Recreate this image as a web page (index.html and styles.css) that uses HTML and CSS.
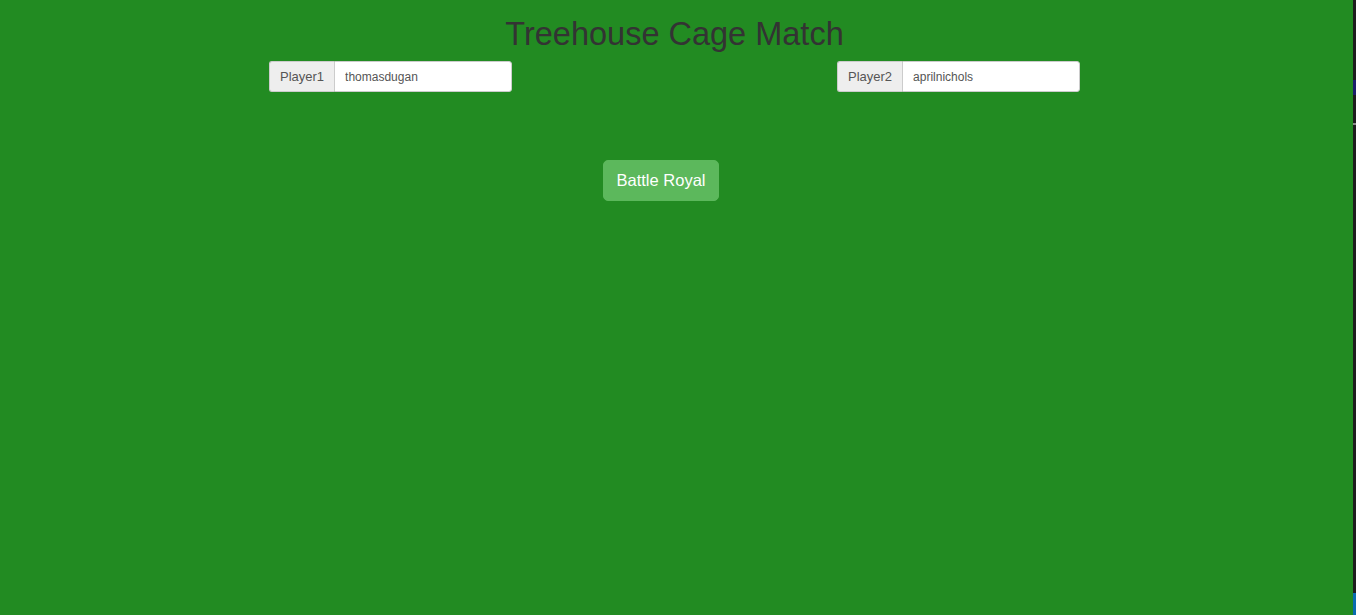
FILE: index.html
```html
<!DOCTYPE html>
<html>
<head>
<meta charset="utf-8">
<title>Treehouse Cage Match</title>
<link rel="stylesheet" href="styles.css">
</head>
<body>
<div class="page">
  <main class="main">
    <h1 class="title">Treehouse Cage Match</h1>
    <div class="players">
      <div class="input-group">
        <span class="addon">Player1</span>
        <input class="field" type="text" value="thomasdugan">
      </div>
      <div class="input-group">
        <span class="addon">Player2</span>
        <input class="field" type="text" value="aprilnichols">
      </div>
    </div>
    <div class="actions">
      <button class="btn-battle" type="button">Battle Royal</button>
    </div>
  </main>
  <div class="edge">
    <div class="edge-dark edge-a"></div>
    <div class="edge-navy"></div>
    <div class="edge-dark edge-b"></div>
    <div class="edge-grey"></div>
    <div class="edge-dark edge-c"></div>
    <div class="edge-blue"></div>
  </div>
</div>
</body>
</html>
```

FILE: styles.css
```css
html, body {
  margin: 0;
  padding: 0;
  height: 100%;
}
body {
  background: #228b22;
  font-family: "Liberation Sans", Arial, sans-serif;
  color: #333;
}
.page {
  display: flex;
  height: 615px;
}
.main {
  flex: 1;
  padding-right: 4px;
  display: flex;
  flex-direction: column;
  align-items: center;
}
.title {
  margin: 17px 0 0;
  font-size: 32.5px;
  font-weight: 400;
  line-height: 35px;
  color: #333333;
}
.players {
  width: 811px;
  display: flex;
  justify-content: space-between;
  margin-top: 9px;
}
.input-group {
  display: flex;
  width: 243px;
  height: 31px;
}
.addon {
  box-sizing: border-box;
  display: flex;
  align-items: center;
  padding: 0 10px;
  background: #eeeeee;
  border: 1px solid #cccccc;
  border-right: 0;
  border-radius: 3px 0 0 3px;
  font-size: 13px;
  color: #555;
}
.field {
  box-sizing: border-box;
  flex: 1;
  min-width: 0;
  height: 31px;
  margin: 0;
  padding: 0 10px;
  border: 1px solid #cccccc;
  border-radius: 0 3px 3px 0;
  background: #fff;
  font-family: "Liberation Sans", Arial, sans-serif;
  font-size: 12px;
  color: #555;
  outline: none;
}
.actions {
  width: 811px;
  display: flex;
  padding-left: 334px;
  box-sizing: border-box;
  margin-top: 68px;
}
.btn-battle {
  box-sizing: border-box;
  width: 116px;
  height: 41px;
  padding: 0;
  border: 1px solid #5cb85c;
  border-radius: 5px;
  background: #5cb85c;
  color: #fff;
  font-family: "Liberation Sans", Arial, sans-serif;
  font-size: 16.5px;
}
.edge {
  width: 3px;
  display: flex;
  flex-direction: column;
}
.edge-dark { background: #1e1e1e; }
.edge-a { height: 80px; }
.edge-navy { height: 15px; background: #1b1f6b; }
.edge-b { height: 28px; }
.edge-grey { height: 2px; background: #8a8a8a; }
.edge-c { flex: 1; }
.edge-blue { height: 22px; background: #0a6cb0; }
```
